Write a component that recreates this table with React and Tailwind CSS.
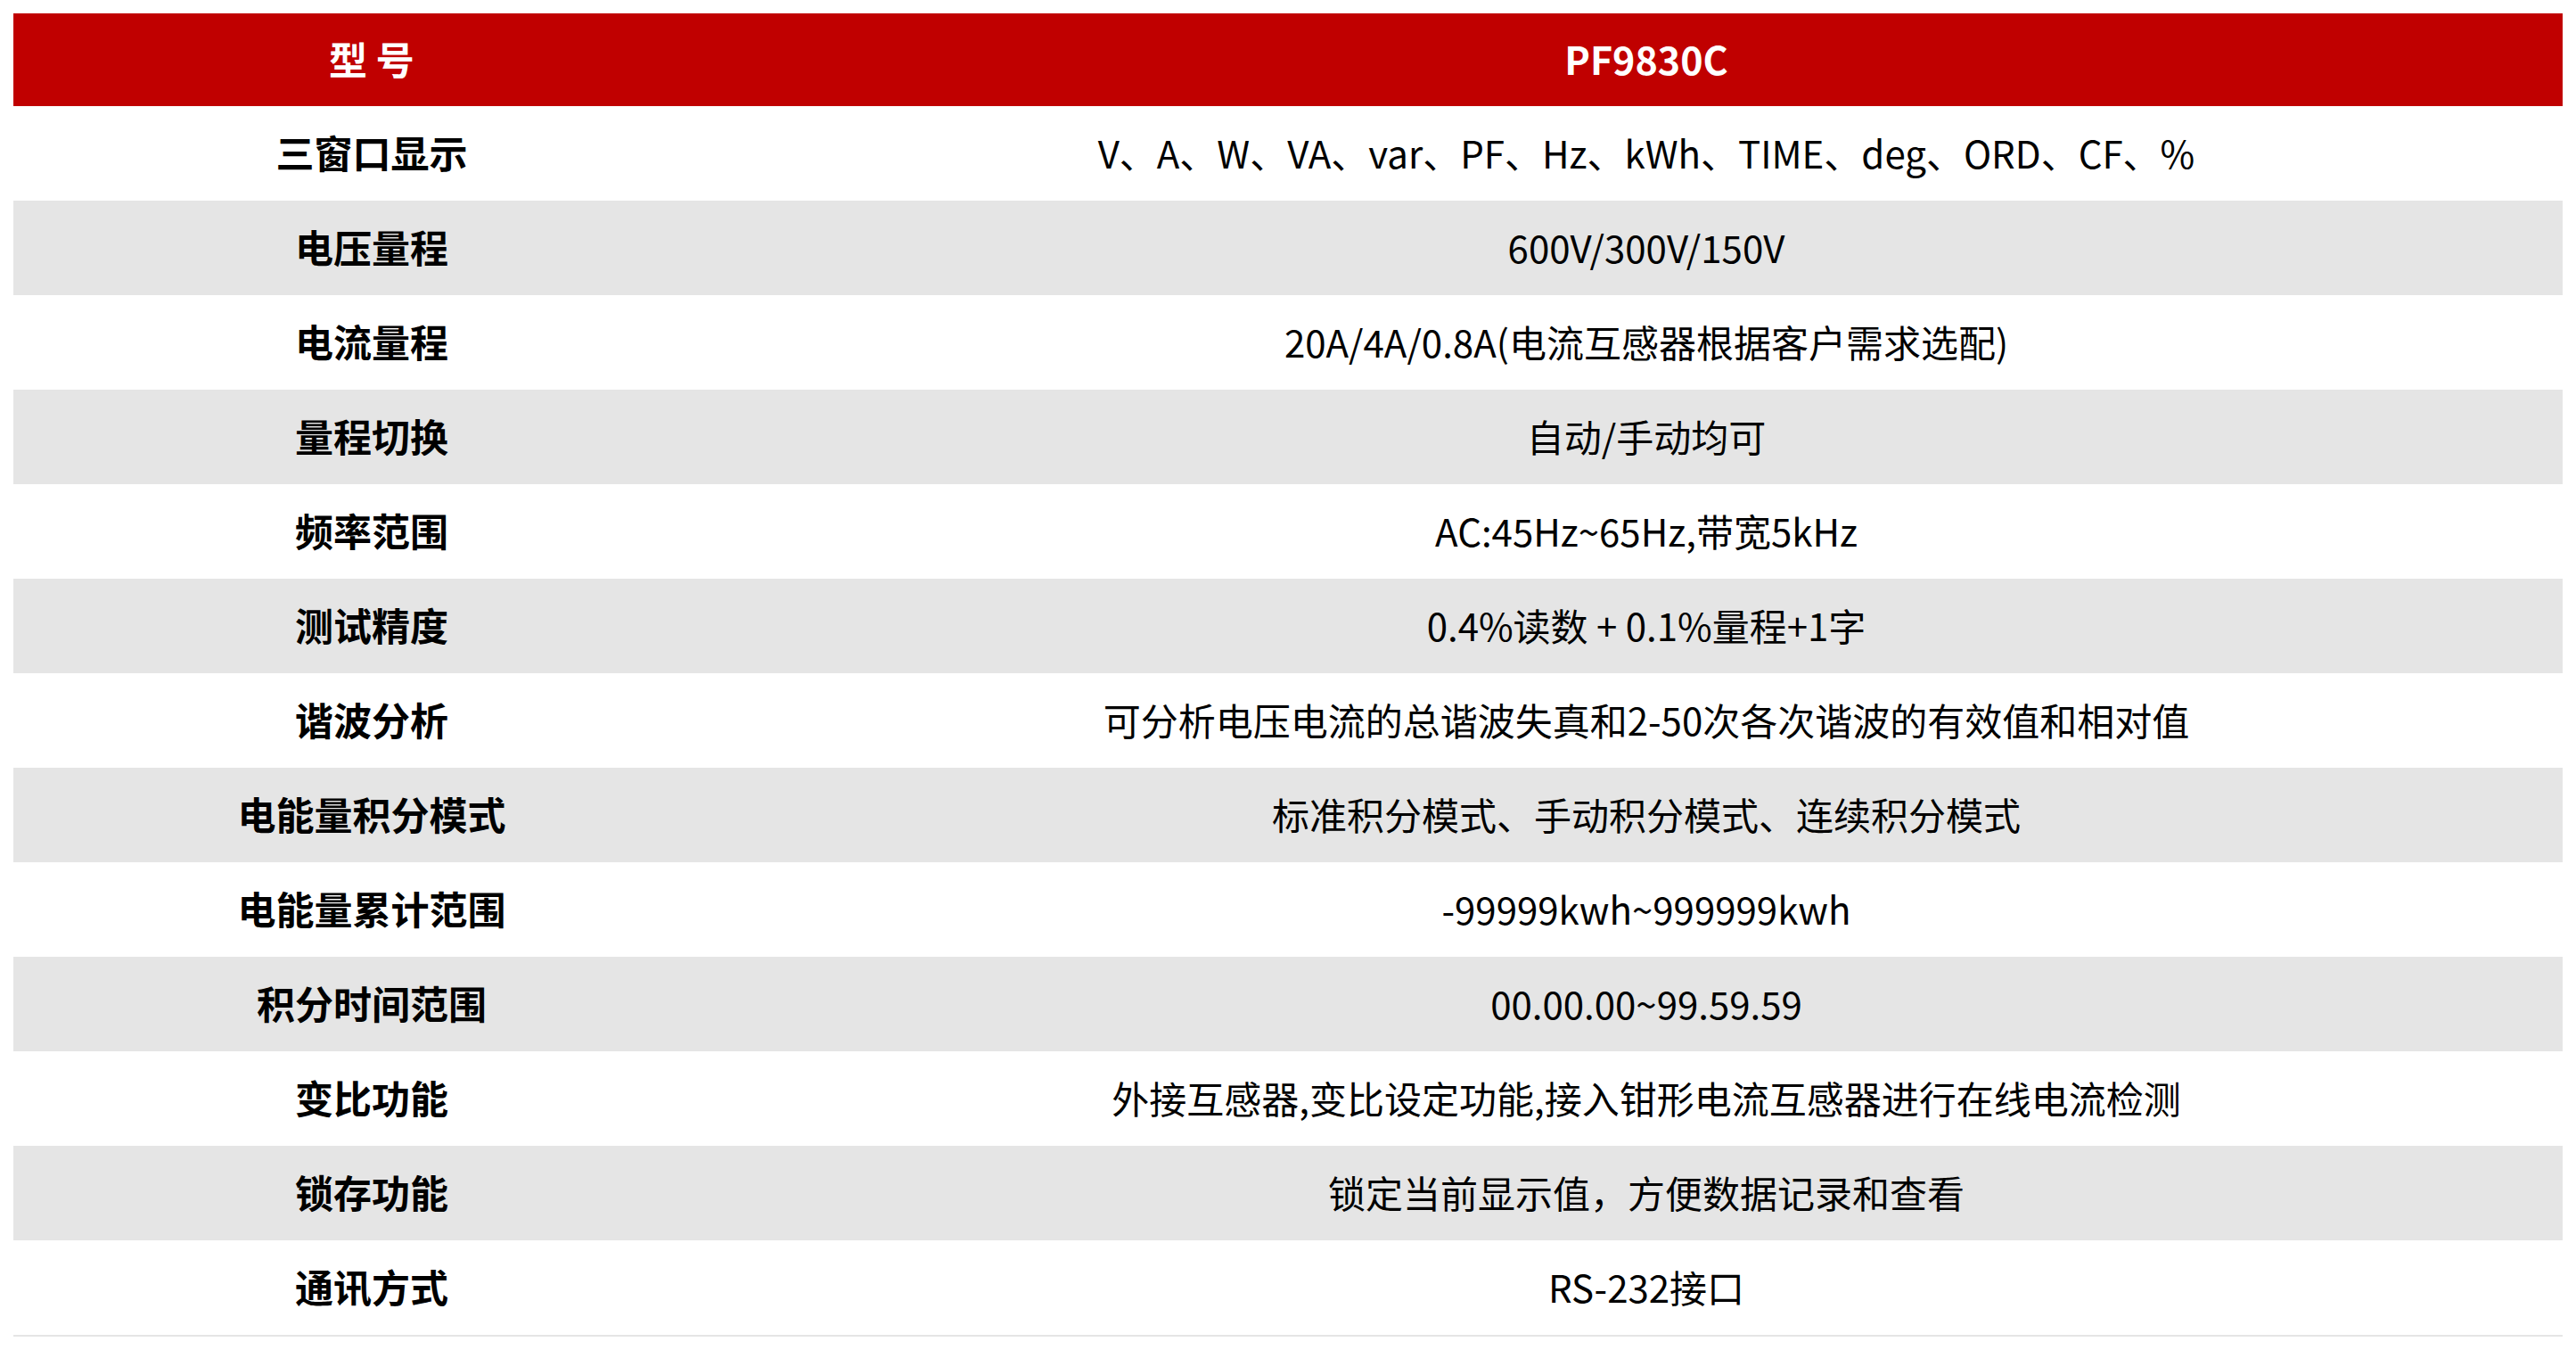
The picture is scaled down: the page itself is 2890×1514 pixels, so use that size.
import React from 'react';

const rows = [
  ['三窗口显示', 'V、A、W、VA、var、PF、Hz、kWh、TIME、deg、ORD、CF、%'],
  ['电压量程', '600V/300V/150V'],
  ['电流量程', '20A/4A/0.8A(电流互感器根据客户需求选配)'],
  ['量程切换', '自动/手动均可'],
  ['频率范围', 'AC:45Hz~65Hz,带宽5kHz'],
  ['测试精度', '0.4%读数 + 0.1%量程+1字'],
  ['谐波分析', '可分析电压电流的总谐波失真和2-50次各次谐波的有效值和相对值'],
  ['电能量积分模式', '标准积分模式、手动积分模式、连续积分模式'],
  ['电能量累计范围', '-99999kwh~999999kwh'],
  ['积分时间范围', '00.00.00~99.59.59'],
  ['变比功能', '外接互感器,变比设定功能,接入钳形电流互感器进行在线电流检测'],
  ['锁存功能', '锁定当前显示值，方便数据记录和查看'],
  ['通讯方式', 'RS-232接口'],
];

const App = () => {
  return (
    <div className="w-[2890px] min-h-[1514px] bg-white pt-[15px] pl-[15px] font-['Noto_Sans_CJK_SC',sans-serif] text-black">
      <div className="w-[2860px] border-b-[2px] border-[#e5e5e5]">
        <div className="grid grid-cols-[804px_1fr] h-[104px] bg-[#c00000] text-white font-bold text-[43px]">
          <div className="flex items-center justify-center pb-[4px]">型&nbsp;号</div>
          <div className="flex items-center justify-center pb-[4px]">PF9830C</div>
        </div>
        {rows.map(([label, value], i) => (
          <div
            key={label}
            className={
              'grid grid-cols-[804px_1fr] h-[106px] ' +
              (i % 2 === 1 ? 'bg-[#e5e5e5]' : 'bg-white')
            }
          >
            <div className="flex items-center justify-center pb-[4px] font-bold text-[43px]">{label}</div>
            <div className="flex items-center justify-center pb-[4px] text-[42px]">{value}</div>
          </div>
        ))}
      </div>
    </div>
  );
};

export default App;
